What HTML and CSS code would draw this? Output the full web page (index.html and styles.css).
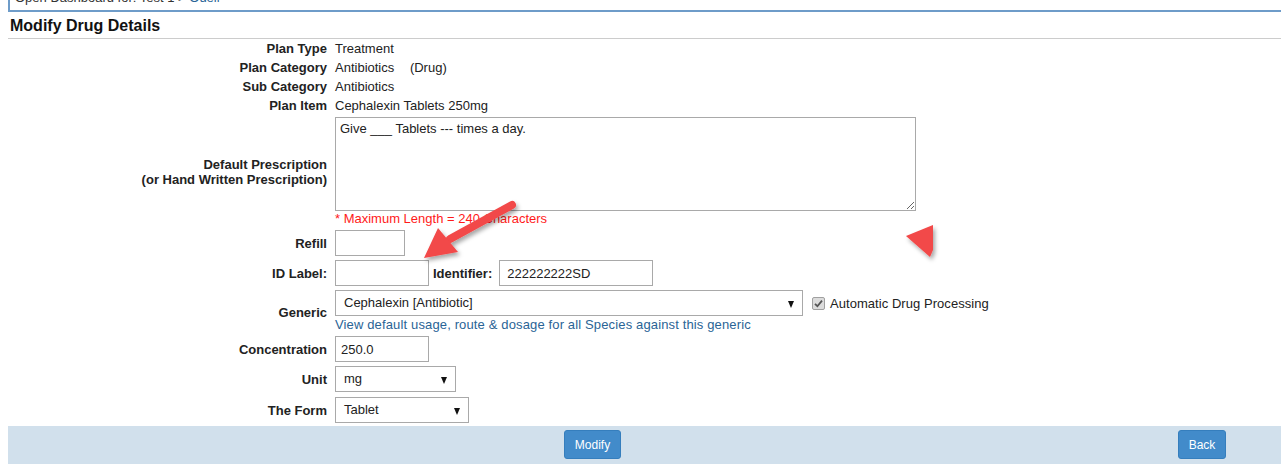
FILE: index.html
```html
<!DOCTYPE html>
<html lang="en">

<head>
  <meta charset="UTF-8" />
  <title>Modify Drug Details</title>
  <link rel="stylesheet" href="styles.css">
</head>

<body>
  <div class="page">
    <!-- Dashboard strip -->
    <div class="dash">
      <span class="dash-text">Open Dashboard for: Test 1 &gt; <a href="#">Odell</a></span>
    </div>

    <h1 class="title">Modify Drug Details</h1>

    <!-- Drug form -->
    <table class="drug-form">
      <tr class="info">
        <td class="label">Plan Type</td>
        <td>Treatment</td>
      </tr>
      <tr class="info">
        <td class="label">Plan Category</td>
        <td>Antibiotics <span class="kind">(Drug)</span></td>
      </tr>
      <tr class="info">
        <td class="label">Sub Category</td>
        <td>Antibiotics</td>
      </tr>
      <tr class="info">
        <td class="label">Plan Item</td>
        <td>Cephalexin Tablets 250mg</td>
      </tr>
      <tr class="ctrl">
        <td class="label">Default Prescription<br>(or Hand Written Prescription)</td>
        <td>
          <textarea class="prescription">Give ___ Tablets --- times a day.</textarea>
          <div class="hint">* Maximum Length = 240 Characters</div>
        </td>
      </tr>
      <tr class="ctrl">
        <td class="label">Refill</td>
        <td><input type="text" class="field w-refill" /></td>
      </tr>
      <tr class="ctrl">
        <td class="label">ID Label:</td>
        <td>
          <div class="inline">
            <input type="text" class="field w-id" />
            <span class="sub-label">Identifier:</span>
            <input type="text" class="field w-ident" value="222222222SD" />
          </div>
        </td>
      </tr>
      <tr class="ctrl generic-row">
        <td class="label">Generic</td>
        <td>
          <div class="inline">
            <div class="select w-generic"><span>Cephalexin [Antibiotic]</span></div>
            <span class="check"><svg width="13" height="13" viewBox="0 0 13 13"><rect x="0.5" y="0.5" width="12" height="12" rx="1.5" fill="#dcdcdc" stroke="#a0a0a0"/><path d="M3 6.8 L5.4 9.2 L10 3.6" fill="none" stroke="#555" stroke-width="1.8"/></svg></span>
            <span class="check-text">Automatic Drug Processing</span>
          </div>
          <a href="#" class="usage-link">View default usage, route &amp; dosage for all Species against this generic</a>
        </td>
      </tr>
      <tr class="ctrl">
        <td class="label">Concentration</td>
        <td><input type="text" class="field w-conc" value="250.0" /></td>
      </tr>
      <tr class="ctrl">
        <td class="label">Unit</td>
        <td><div class="select w-unit"><span>mg</span></div></td>
      </tr>
      <tr class="ctrl form-row">
        <td class="label">The Form</td>
        <td><div class="select w-form"><span>Tablet</span></div></td>
      </tr>
    </table>

    <!-- Actions -->
    <div class="actions">
      <button class="btn btn-modify">Modify</button>
      <button class="btn btn-back">Back</button>
    </div>
  </div>

  <!-- Screenshot annotations -->
  <svg class="marks" width="1281" height="464" viewBox="0 0 1281 464">
    <defs>
      <filter id="shade" x="-20%" y="-20%" width="160%" height="160%">
        <feDropShadow dx="2" dy="3" stdDeviation="2" flood-color="#000" flood-opacity="0.35" />
      </filter>
    </defs>
    <g filter="url(#shade)" fill="#f24848">
      <path d="M512 205 L450 239" stroke="#f24848" stroke-width="8" stroke-linecap="round" />
      <polygon points="424,258 438,228 458,252" />
      <polygon points="906,236 933,225 933,250 930,257" />
    </g>
  </svg>
</body>

</html>
```

FILE: styles.css
```css
body {
  margin: 0;
  font-family: "Liberation Sans", Arial, sans-serif;
  font-size: 13px;
  color: #222222;
  background-color: #ffffff;
  overflow: hidden;
}

.page {
  padding-left: 8px;
}

.dash {
  display: flow-root;
  height: 10px;
  border-left: 2px solid #6e9cc9;
  border-bottom: 2px solid #6e9cc9;
  padding-left: 5px;
}

.dash-text {
  display: block;
  margin-top: -9px;
  line-height: 13px;
  color: #333333;
}

.dash-text a {
  color: #2a6496;
  text-decoration: none;
}

.title {
  margin: 4px 0 0;
  padding: 0 0 2px 2px;
  font-size: 16px;
  line-height: 20px;
  font-weight: bold;
  color: #111111;
  border-bottom: 1px solid #cccccc;
}

.drug-form {
  border-collapse: collapse;
}

.drug-form td {
  padding: 0;
  vertical-align: middle;
}

.drug-form td.label {
  width: 319px;
  padding-right: 8px;
  text-align: right;
  font-weight: bold;
  line-height: 15px;
}

.info td {
  height: 19px;
  line-height: 19px;
}

.ctrl td {
  padding-top: 2px;
  padding-bottom: 2px;
}

.kind {
  margin-left: 12px;
}

.prescription {
  display: block;
  box-sizing: border-box;
  width: 581px;
  height: 94px;
  margin: 0;
  padding: 3px 4px;
  border: 1px solid #a9a9a9;
  font-family: "Liberation Sans", Arial, sans-serif;
  font-size: 13px;
  color: #222222;
  resize: both;
}

.hint {
  line-height: 15px;
  color: #ff1a1a;
}

.inline {
  display: flex;
  align-items: center;
}

.field {
  display: block;
  box-sizing: border-box;
  height: 26px;
  margin: 0;
  padding: 0 5px;
  border: 1px solid #a9a9a9;
  font-family: "Liberation Sans", Arial, sans-serif;
  font-size: 13px;
  color: #222222;
}

.w-refill { width: 70px; }
.w-id { width: 94px; }
.w-ident { width: 154px; padding-left: 7px; }
.w-conc { width: 94px; }

.sub-label {
  margin: 0 7px 0 4px;
  font-weight: bold;
}

.select {
  position: relative;
  box-sizing: border-box;
  height: 26px;
  padding-left: 8px;
  border: 1px solid #a9a9a9;
  line-height: 24px;
  color: #222222;
  background-color: #ffffff;
}

.select::after {
  content: "";
  position: absolute;
  right: 8px;
  top: 10px;
  border-left: 3.5px solid transparent;
  border-right: 3.5px solid transparent;
  border-top: 7px solid #111111;
}

.w-generic { width: 468px; }
.w-unit { width: 121px; }
.w-form { width: 134px; }

.check {
  display: flex;
  margin-left: 9px;
  margin-right: 5px;
}

.check-text {
  color: #222222;
  letter-spacing: 0.05px;
}

.generic-row td {
  padding-bottom: 0;
}

.usage-link {
  display: block;
  line-height: 18px;
  color: #2a6496;
  letter-spacing: 0.14px;
  text-decoration: none;
}

.form-row td {
  padding-top: 3px;
  padding-bottom: 1px;
}

.actions {
  display: flex;
  align-items: flex-start;
  margin-top: 2px;
  height: 40px;
  padding-top: 4px;
  background-color: #d1e0ec;
}

.btn {
  box-sizing: border-box;
  height: 29px;
  padding: 0 9px;
  border: 1px solid #357ebd;
  border-radius: 3px;
  background-color: #428bca;
  color: #ffffff;
  font-family: "Liberation Sans", Arial, sans-serif;
  font-size: 12px;
  cursor: pointer;
}

.btn-modify {
  width: 57px;
  margin-left: 556px;
}

.btn-back {
  width: 48px;
  margin-left: auto;
  margin-right: 55px;
}

.marks {
  position: absolute;
  left: 0;
  top: 0;
  pointer-events: none;
}
```
